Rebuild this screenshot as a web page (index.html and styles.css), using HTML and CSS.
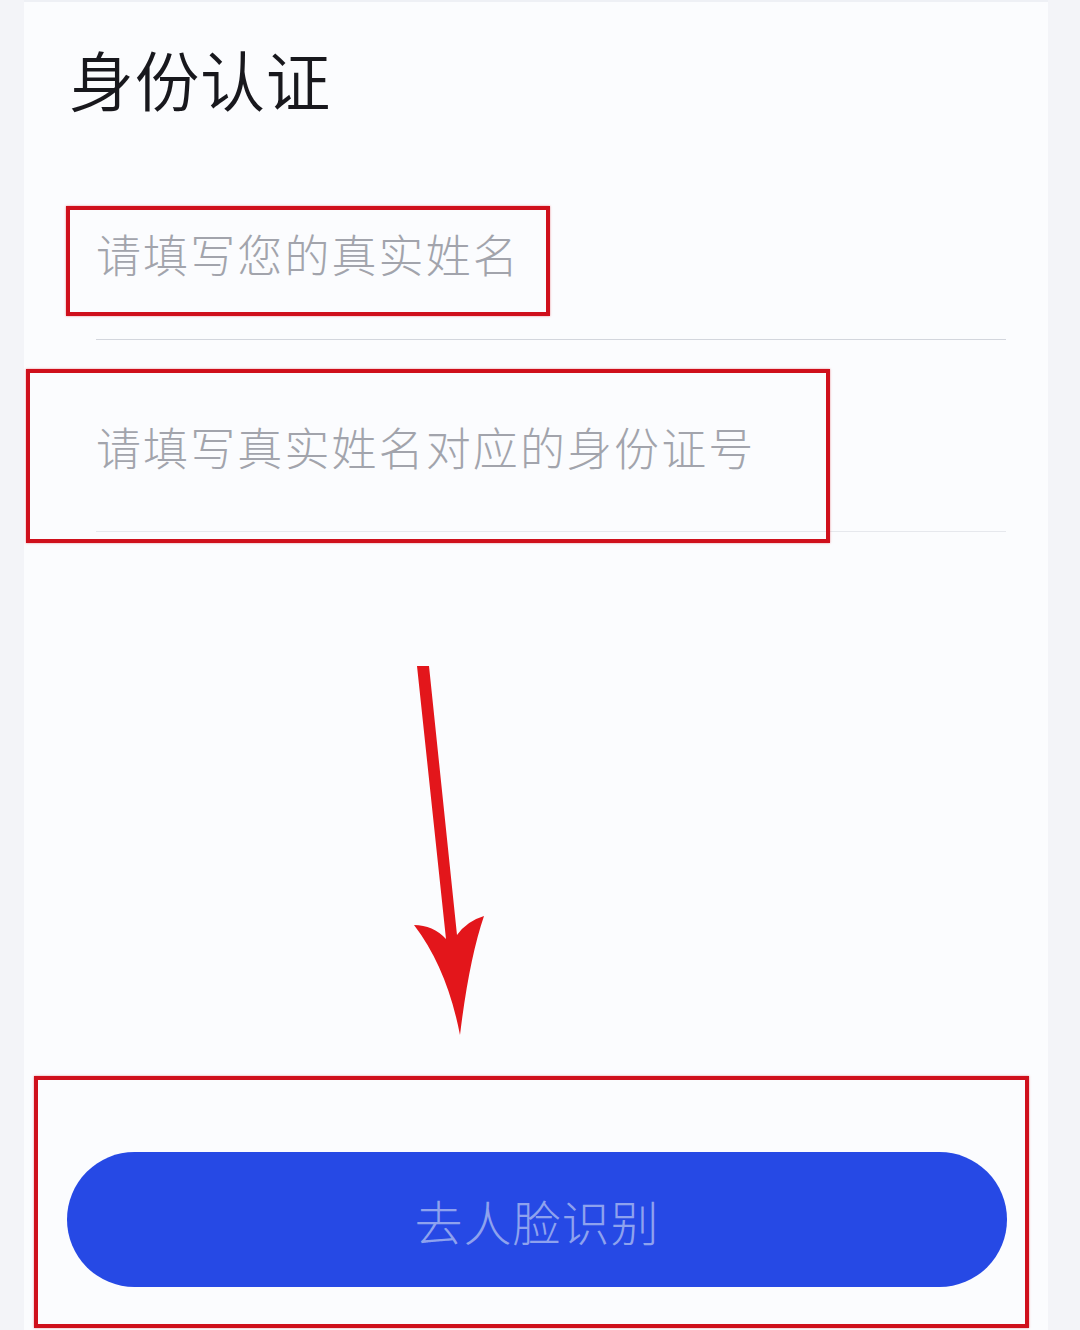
FILE: index.html
```html
<!DOCTYPE html>
<html lang="zh-CN">
<head>
<meta charset="utf-8">
<title>身份认证</title>
<link rel="stylesheet" href="styles.css">
</head>
<body>
<div class="page">
  <main class="card">
    <h1 class="title">身份认证</h1>
    <div class="field field-name">
      <input class="input" type="text" placeholder="请填写您的真实姓名">
    </div>
    <div class="field field-id">
      <input class="input" type="text" placeholder="请填写真实姓名对应的身份证号">
    </div>
    <button class="btn" type="button">去人脸识别</button>

    <div class="mark mark-name"></div>
    <div class="mark mark-id"></div>
    <div class="mark mark-btn"></div>
    <svg class="arrow" viewBox="400 660 100 380" width="100" height="380" aria-hidden="true">
      <path d="M417 666 L429 666 L457 935 Q467 921 484 916 Q469 960 460 1035 Q447 968 414 925 Q433 925 446 939 Z" fill="#e3161b"/>
    </svg>
  </main>
</div>
</body>
</html>
```
FILE: styles.css
```css
html, body {
  margin: 0;
  padding: 0;
}
body {
  background: #f3f4f8;
  font-family: "Noto Sans CJK SC", "Noto Sans", sans-serif;
}
.page {
  width: 1080px;
  height: 1330px;
  overflow: hidden;
}
.card {
  position: relative;
  margin-left: 24px;
  width: 1024px;
  height: 1330px;
  box-sizing: border-box;
  background: #fbfcfe;
  border-top: 2px solid #eef0f5;
  display: flex;
  flex-direction: column;
}
.title {
  margin: 44px 0 0 45px;
  font-size: 65px;
  line-height: 64px;
  font-weight: 350;
  letter-spacing: 0.5px;
  color: #18181d;
}
.field {
  margin-left: 72px;
  margin-right: 42px;
  border-bottom: 1px solid #d3d6dd;
}
.field-name {
  margin-top: 114px;
  padding-bottom: 55px;
}
.field-id {
  padding-top: 77px;
  padding-bottom: 54px;
  border-bottom-color: #e6e8ed;
}
.input {
  display: block;
  width: 100%;
  height: 60px;
  border: 0;
  padding: 0;
  margin: 0;
  background: transparent;
  font-family: "Noto Sans CJK SC", "Noto Sans", sans-serif;
  font-size: 45px;
  font-weight: 300;
  letter-spacing: 2.1px;
  line-height: 60px;
  outline: none;
}
.input::placeholder {
  color: #a2a4ac;
}
.btn {
  margin: auto 41px 43px 43px;
  height: 135px;
  border: 0;
  border-radius: 68px;
  background: #2649e5;
  color: #8ea2ee;
  font-family: "Noto Sans CJK SC", "Noto Sans", sans-serif;
  font-size: 48px;
  font-weight: 300;
  letter-spacing: 1px;
}
.mark {
  position: absolute;
  border: 4px solid #cf101c;
  box-shadow: 0 0 2px rgba(220, 30, 40, 0.5);
  box-sizing: border-box;
  pointer-events: none;
}
.mark-name {
  left: 42px;
  top: 204px;
  width: 484px;
  height: 110px;
}
.mark-id {
  left: 2px;
  top: 367px;
  width: 804px;
  height: 174px;
}
.mark-btn {
  left: 10px;
  top: 1074px;
  width: 995px;
  height: 252px;
}
.arrow {
  position: absolute;
  left: 376px;
  top: 658px;
}
```
